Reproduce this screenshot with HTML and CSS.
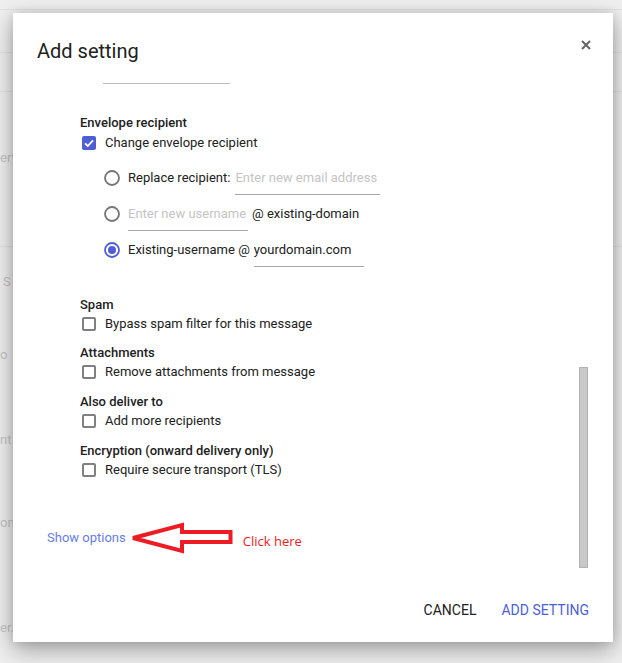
FILE: index.html
```html
<!DOCTYPE html>
<html>
<head>
<meta charset="utf-8">
<title>Add setting</title>
<link rel="stylesheet" href="styles.css">
</head>
<body>
<div class="page">
  <div class="bg-row bg-r1"></div>
  <div class="bg-row bg-r2"></div>
  <div class="bg-row bg-r3"></div>
  <div class="bg-text bg-t1">erv</div>
  <div class="bg-row bg-r4"></div>
  <div class="bg-text bg-t2">S</div>
  <div class="bg-text bg-t3">o</div>
  <div class="bg-text bg-t4">nt :</div>
  <div class="bg-text bg-t5">on</div>
  <div class="bg-text bg-t6">er.</div>
</div>

<div class="dialog">
  <div class="dialog-header">
    <h1 class="dialog-title">Add setting</h1>
    <button class="close-btn" aria-label="Close">
      <svg width="10" height="10" viewBox="0 0 10 10"><path d="M1 1 L9 9 M9 1 L1 9" stroke="#666" stroke-width="2" fill="none"/></svg>
    </button>
  </div>

  <div class="dialog-body">
    <div class="scroll-content">
      <div class="field-remnant"></div>

      <div class="options">
        <section class="section section-envelope">
          <div class="section-title">Envelope recipient</div>
          <div class="check-row check-row-envelope">
            <span class="checkbox checked"><svg width="14" height="14" viewBox="0 0 14 14"><path d="M3 7.3 L5.8 10 L11 4.3" stroke="#fff" stroke-width="1.8" fill="none"/></svg></span>
            <span class="check-label">Change envelope recipient</span>
          </div>
          <div class="radio-group">
            <div class="radio-row">
              <span class="radio"><svg width="16" height="16" viewBox="0 0 16 16"><circle cx="8" cy="8" r="7" stroke="#757575" stroke-width="1.8" fill="none"/></svg></span>
              <span class="radio-label">Replace recipient:</span>
              <span class="text-field field-email"><span class="placeholder">Enter new email address</span></span>
            </div>
            <div class="radio-row">
              <span class="radio"><svg width="16" height="16" viewBox="0 0 16 16"><circle cx="8" cy="8" r="7" stroke="#757575" stroke-width="1.8" fill="none"/></svg></span>
              <span class="text-field field-user"><span class="placeholder">Enter new username</span></span>
              <span class="radio-label">@ existing-domain</span>
            </div>
            <div class="radio-row">
              <span class="radio"><svg width="16" height="16" viewBox="0 0 16 16"><circle cx="8" cy="8" r="7" stroke="#4e5fd6" stroke-width="1.8" fill="none"/><circle cx="8" cy="8" r="4" fill="#4e5fd6"/></svg></span>
              <span class="radio-label">Existing-username @</span>
              <span class="text-field field-domain"><span class="value">yourdomain.com</span></span>
            </div>
          </div>
        </section>

        <section class="section">
          <div class="section-title">Spam</div>
          <div class="check-row">
            <span class="checkbox"></span>
            <span class="check-label">Bypass spam filter for this message</span>
          </div>
        </section>

        <section class="section">
          <div class="section-title">Attachments</div>
          <div class="check-row">
            <span class="checkbox"></span>
            <span class="check-label">Remove attachments from message</span>
          </div>
        </section>

        <section class="section">
          <div class="section-title">Also deliver to</div>
          <div class="check-row">
            <span class="checkbox"></span>
            <span class="check-label">Add more recipients</span>
          </div>
        </section>

        <section class="section">
          <div class="section-title">Encryption (onward delivery only)</div>
          <div class="check-row">
            <span class="checkbox"></span>
            <span class="check-label">Require secure transport (TLS)</span>
          </div>
        </section>
      </div>

      <div class="show-row">
        <a class="show-options">Show options</a>
        <svg class="arrow" width="106" height="36" viewBox="0 0 106 36">
          <path d="M4 18 L53 5 L53 12 L101.5 12 L101.5 22 L53 22 L53 31 Z" fill="#fff" stroke="#ed1c24" stroke-width="4" stroke-linejoin="miter" stroke-miterlimit="3"/>
        </svg>
        <span class="click-here">Click here</span>
      </div>
    </div>
    <div class="scrollbar"><div class="thumb"></div></div>
  </div>

  <div class="dialog-footer">
    <button class="btn btn-cancel">CANCEL</button>
    <button class="btn btn-primary">ADD SETTING</button>
  </div>
</div>
</body>
</html>
```

FILE: styles.css
```css
* { box-sizing: border-box; }

html, body {
  margin: 0;
  padding: 0;
}

body {
  width: 622px;
  height: 663px;
  overflow: hidden;
  position: relative;
  background: #efefef;
  font-family: Roboto, "Noto Sans", Arial, sans-serif;
  color: #212121;
}

/* underlying page, seen through the overlay */
.page {
  width: 622px;
  height: 663px;
}

.bg-row {
  border-bottom: 1px solid #e2e2e2;
}
.bg-r1 { height: 10px; }
.bg-r2 { height: 43px; }
.bg-r3 { height: 39px; }
.bg-r4 { height: 80px; }

.bg-text {
  font-size: 13px;
  line-height: 18px;
  height: 18px;
  color: #c4c4c4;
  white-space: nowrap;
}
.bg-t1 { margin-top: 57px; }
.bg-t2 { margin-top: 26px; padding-left: 3px; }
.bg-t3 { margin-top: 55px; }
.bg-t4 { margin-top: 67px; }
.bg-t5 { margin-top: 65px; }
.bg-t6 { margin-top: 87px; }

/* dialog */
.dialog {
  position: absolute;
  left: 13px;
  top: 13px;
  width: 600px;
  height: 629px;
  background: #fff;
  display: flex;
  flex-direction: column;
  box-shadow: 0 8px 22px rgba(0, 0, 0, 0.33), 0 0 10px rgba(0, 0, 0, 0.12);
}

.dialog-header {
  height: 50px;
  padding: 20px 15px 0 24px;
  display: flex;
  justify-content: space-between;
  align-items: flex-start;
}

.dialog-title {
  margin: 6px 0 0;
  font-size: 20px;
  line-height: 24px;
  font-weight: 400;
  color: #212121;
}

.close-btn {
  width: 24px;
  height: 24px;
  padding: 0;
  border: 0;
  background: none;
  display: flex;
  align-items: center;
  justify-content: center;
}

.dialog-body {
  flex: 1;
  display: flex;
  overflow: hidden;
}

.scroll-content {
  flex: 1;
  padding-left: 34px;
}

.field-remnant {
  width: 127px;
  margin: 20px 0 0 56px;
  border-top: 1px solid #bdbdbd;
}

.options {
  margin: 30px 0 0 33px;
  font-size: 13px;
}

.section + .section { margin-top: 10.7px; }

.section-title {
  height: 18px;
  line-height: 18px;
  font-weight: 500;
  color: #212121;
}

.check-row {
  height: 20px;
  display: flex;
  align-items: center;
}
.check-row-envelope { margin-top: 1px; }

.checkbox {
  width: 14px;
  height: 14px;
  margin-left: 2px;
  margin-right: 9px;
  border: 2px solid #808080;
  border-radius: 2px;
  flex: none;
  position: relative;
}
.checkbox.checked {
  background: #4e5fd6;
  border-color: #4e5fd6;
}
.checkbox.checked svg {
  position: absolute;
  left: -2px;
  top: -2px;
}

.check-label {
  line-height: 18px;
  color: #212121;
}

.radio-group {
  margin: 16px 0 0 24px;
  padding-bottom: 8px;
}

.radio-row {
  height: 36px;
  display: flex;
  align-items: flex-start;
  gap: 4px;
}

.radio {
  width: 16px;
  height: 18px;
  display: flex;
  align-items: center;
  margin-right: 4px;
  flex: none;
}

.radio-label {
  line-height: 18px;
  white-space: nowrap;
}

.text-field {
  line-height: 18px;
  padding-bottom: 7px;
  border-bottom: 1px solid #a8a8a8;
  white-space: nowrap;
  overflow: hidden;
}
.field-email { width: 145px; margin-left: 1px; }
.field-user { width: 120px; }
.field-domain { width: 110px; }

.placeholder { color: #c4c4c4; }
.value { color: #212121; }

.show-row {
  margin-top: 40px;
  height: 36px;
  display: flex;
  align-items: center;
}

.show-options {
  font-size: 13px;
  line-height: 18px;
  color: #677de6;
}

.arrow {
  margin-left: 3px;
  flex: none;
}

.click-here {
  margin-left: 8px;
  margin-top: 6px;
  font-family: "Open Sans", "Noto Sans", sans-serif;
  font-size: 13px;
  line-height: 18px;
  color: #ed1c24;
}

.scrollbar {
  width: 9px;
  margin-right: 25px;
  flex: none;
}

.thumb {
  margin-top: 304px;
  height: 201px;
  background: #c9c9c9;
  border: 1px solid #b3b3b3;
}

.dialog-footer {
  height: 58px;
  padding: 8px 16px 14px;
  display: flex;
  justify-content: flex-end;
  gap: 9px;
}

.btn {
  height: 36px;
  padding: 0 8px;
  border: 0;
  background: none;
  font-family: Roboto, "Noto Sans", Arial, sans-serif;
  font-size: 14px;
  font-weight: 400;
}
.btn-cancel { color: #212121; }
.btn-primary { color: #4e5fd6; }
```
